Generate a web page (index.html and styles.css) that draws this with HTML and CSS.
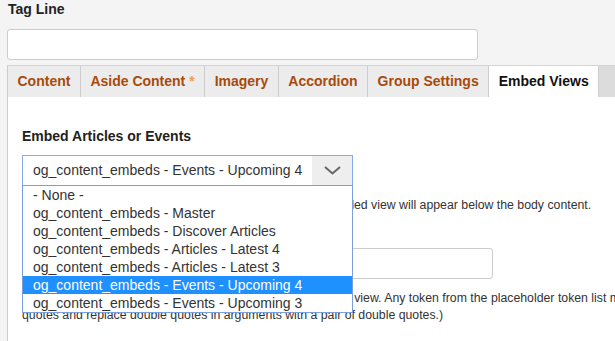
FILE: index.html
```html
<!DOCTYPE html>
<html lang="en">

<head>
    <meta charset="UTF-8">
    <meta name="viewport" content="width=device-width, initial-scale=1.0">
    <title>Edit Group</title>
    <link rel="stylesheet" href="styles.css">
</head>

<body>
    <div class="page">
        <label class="field-label tagline-label" for="tag-line">Tag Line</label>
        <input class="text-input" type="text" id="tag-line" name="tag-line">

        <!-- Vertical tabs -->
        <div class="tabs">
            <a class="tab">Content</a>
            <a class="tab">Aside Content <span class="required">*</span></a>
            <a class="tab">Imagery</a>
            <a class="tab">Accordion</a>
            <a class="tab">Group Settings</a>
            <a class="tab active">Embed Views</a>
        </div>

        <div class="panel">
            <div class="form-item">
                <label class="field-label">Embed Articles or Events</label>
                <div class="select">
                    <span class="select-value">og_content_embeds - Events - Upcoming 4</span>
                    <span class="select-arrow">
                        <svg width="17" height="9" viewBox="0 0 17 9">
                            <polyline points="1,1 8.5,7.5 16,1" fill="none" stroke="#666" stroke-width="2" />
                        </svg>
                    </span>
                    <!-- Open dropdown list -->
                    <ul class="select-list">
                        <li>- None -</li>
                        <li>og_content_embeds - Master</li>
                        <li>og_content_embeds - Discover Articles</li>
                        <li>og_content_embeds - Articles - Latest 4</li>
                        <li>og_content_embeds - Articles - Latest 3</li>
                        <li class="selected">og_content_embeds - Events - Upcoming 4</li>
                        <li>og_content_embeds - Events - Upcoming 3</li>
                    </ul>
                </div>
                <div class="description">Select a view to be embedded with this content. The embedded view will appear below the body content.</div>
            </div>

            <div class="form-item">
                <label class="field-label arguments-label" for="arguments">Arguments</label>
                <input class="text-input" type="text" id="arguments" name="arguments">
                <div class="description description-args">Provide a comma separated list of parameters to pass to the view. Any token from the placeholder token list may be used. (Enclose arguments containing commas with double quotes and replace double quotes in arguments with a pair of double quotes.)</div>
            </div>
        </div>
    </div>
</body>

</html>
```

FILE: styles.css
```css
/* Page */
html,
body {
    overflow: hidden;
}

body {
    margin: 0;
    background-color: #f4f4f4;
    font-family: "Liberation Sans", Arial, sans-serif;
    color: #333;
}

.page {
    width: 1000px;
    margin-left: 7px;
}

/* Labels and inputs */
.field-label {
    display: block;
    font-size: 14px;
    line-height: 18px;
    font-weight: bold;
    color: #222;
}

.tagline-label {
    padding-left: 1px;
}

.text-input {
    display: block;
    box-sizing: border-box;
    width: 471px;
    height: 31px;
    margin: 11px 0 0;
    border: 1px solid #ccc;
    border-radius: 3px;
    background-color: #fff;
}

/* Tabs */
.tabs {
    display: flex;
    margin-top: 5px;
    border-top: 1px solid #d4d4d4;
    border-left: 1px solid #ccc;
    background-color: #dcdcdc;
}

.tab {
    padding: 0 9.5px;
    line-height: 31px;
    font-size: 14px;
    font-weight: bold;
    color: #a84a0a;
    background-color: #ececec;
    border-right: 1px solid #ccc;
    cursor: pointer;
}

.tab .required {
    color: #f39a4e;
}

.tab.active {
    background-color: #fff;
    color: #111;
}

/* Panel */
.panel {
    background-color: #fff;
    border-left: 1px solid #ccc;
    padding: 30px 14px 40px;
}

/* Select with open list */
.select {
    position: relative;
    display: flex;
    box-sizing: border-box;
    width: 331px;
    height: 31px;
    margin-top: 10px;
    border: 1px solid #84aaea;
    background-color: #fff;
}

.select-value {
    padding-left: 10px;
    line-height: 29px;
    font-size: 14px;
    color: #333;
}

.select-arrow {
    display: flex;
    align-items: center;
    justify-content: center;
    width: 40px;
    margin-left: auto;
    background-color: #eee;
}

.select-list {
    position: absolute;
    top: 29px;
    left: -1px;
    z-index: 2;
    box-sizing: border-box;
    width: 331px;
    margin: 0;
    padding: 0;
    list-style: none;
    border: 1px solid #7d9fd9;
    background-color: #fff;
}

.select-list li {
    padding-left: 10px;
    line-height: 18px;
    font-size: 14px;
    color: #333;
    white-space: nowrap;
}

.select-list li.selected {
    background-color: #1e90ff;
    color: #fff;
}

/* Descriptions */
.description {
    margin-top: 10px;
    font-size: 12.3px;
    line-height: 18px;
    color: #333;
}

.arguments-label {
    margin-top: 8px;
}

.arguments-label + .text-input {
    margin-top: 8px;
}

.description-args {
    margin-top: 11px;
    line-height: 17px;
}
```
